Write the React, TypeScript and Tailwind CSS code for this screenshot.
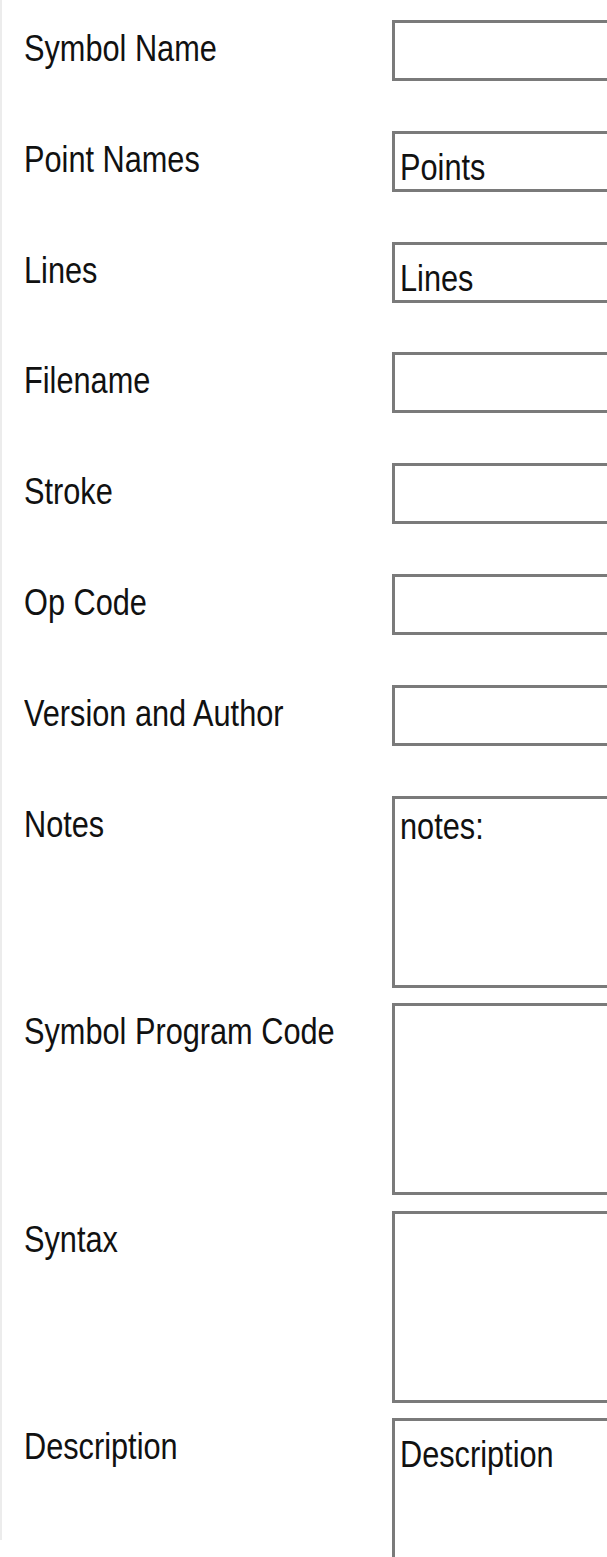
type Field = {
  label: string;
  value?: string;
  multi?: boolean;
  pad?: string;
};

const fields: Field[] = [
  { label: "Symbol Name" },
  { label: "Point Names", value: "Points" },
  { label: "Lines", value: "Lines" },
  { label: "Filename" },
  { label: "Stroke" },
  { label: "Op Code" },
  { label: "Version and Author" },
  { label: "Notes", value: "notes:", multi: true, pad: "pt-0" },
  { label: "Symbol Program Code", multi: true },
  { label: "Syntax", multi: true },
  { label: "Description", value: "Description", multi: true, pad: "pt-[6px]" },
];

function Text({ children }: { children: React.ReactNode }) {
  return (
    <span className="inline-block origin-left scale-x-[0.83] whitespace-nowrap leading-none">
      {children}
    </span>
  );
}

function Row({ f }: { f: Field }) {
  return (
    <div className={"flex shrink-0 " + (f.multi ? "h-[207.5px]" : "h-[110.8px]")}>
      <div className="w-[390px] shrink-0 pl-[22px] pt-[1px]">
        <Text>{f.label}</Text>
      </div>
      <div
        className={
          "w-[260px] shrink-0 border-[3px] border-[#7a7a7a] bg-white pl-[5px] " +
          (f.multi ? "h-[192px] " : "h-[61px] pt-[6px] ") +
          (f.pad ?? "")
        }
      >
        {f.value && <Text>{f.value}</Text>}
      </div>
    </div>
  );
}

export default function App() {
  return (
    <div className="flex h-[1557px] w-[607px] overflow-hidden bg-white font-['Liberation_Sans',Arial,sans-serif] text-[37px] text-[#111]">
      {/* faint window edge */}
      <div className="h-[1540px] w-[2px] shrink-0 bg-[#ececec]" />

      <div className="flex flex-col pt-[20px]">
        {fields.map((f) => (
          <Row key={f.label} f={f} />
        ))}
      </div>
    </div>
  );
}
